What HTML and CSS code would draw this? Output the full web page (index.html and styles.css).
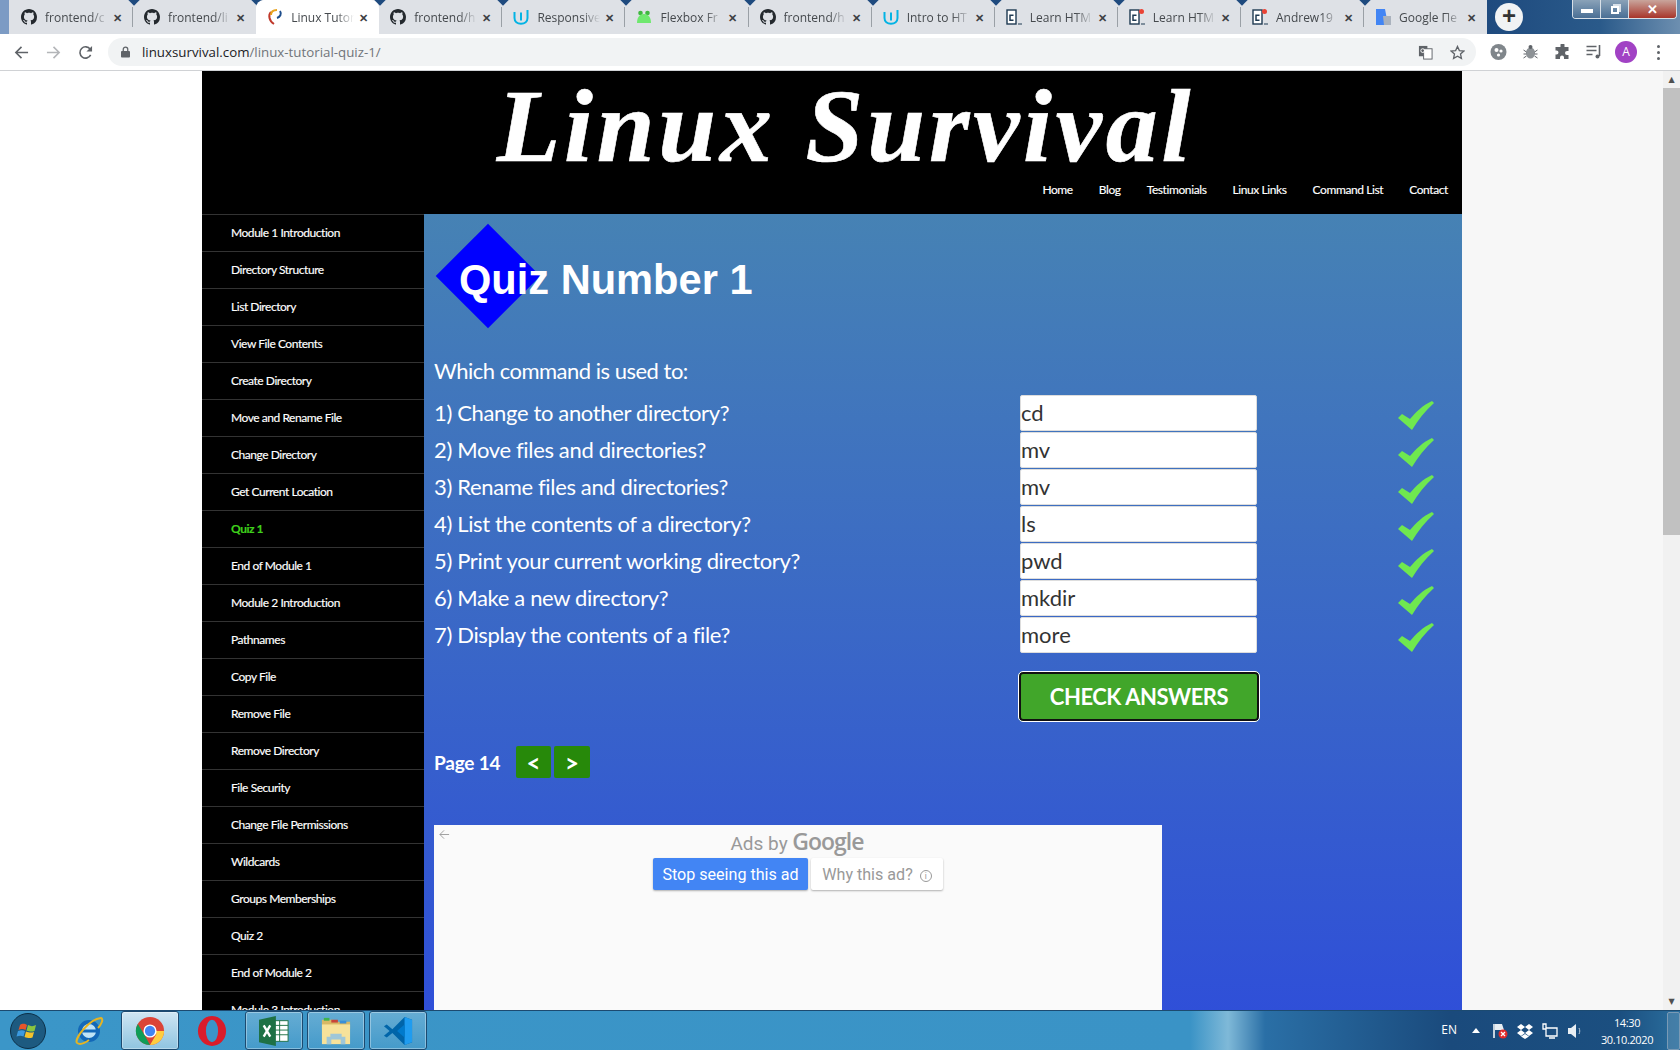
FILE: index.html
```html
<!DOCTYPE html>
<html lang="en">
<head>
<meta charset="UTF-8" />
<title>Linux Tutorial Quiz 1</title>
<link rel="stylesheet" href="styles.css">
</head>
<body>

<svg class="defs" width="0" height="0">
  <symbol id="gh" viewBox="0 0 16 16"><path fill="#24292e" d="M8 0C3.58 0 0 3.58 0 8c0 3.54 2.29 6.53 5.47 7.59.4.07.55-.17.55-.38 0-.19-.01-.82-.01-1.49-2.01.37-2.53-.49-2.69-.94-.09-.23-.48-.94-.82-1.13-.28-.15-.68-.52-.01-.53.63-.01 1.08.58 1.23.82.72 1.21 1.87.87 2.33.66.07-.52.28-.87.51-1.07-1.78-.2-3.64-.89-3.64-3.95 0-.87.31-1.59.82-2.15-.08-.2-.36-1.02.08-2.12 0 0 .67-.21 2.2.82.64-.18 1.32-.27 2-.27.68 0 1.36.09 2 .27 1.53-1.04 2.2-.82 2.2-.82.44 1.1.16 1.92.08 2.12.51.56.82 1.27.82 2.15 0 3.07-1.87 3.75-3.65 3.95.29.25.54.73.54 1.48 0 1.07-.01 1.93-.01 2.2 0 .21.15.46.55.38A8.013 8.013 0 0016 8c0-4.42-3.58-8-8-8z"/></symbol>
  <symbol id="uda" viewBox="0 0 16 16"><path fill="none" stroke="#02b3e4" stroke-width="2" d="M1.500 3v6c0 3.500 2.800 5.800 6.500 5.800s6.500-2.300 6.500-5.800V1M8 11.500V3.500"/></symbol>
  <symbol id="cc" viewBox="0 0 16 16"><rect x="1" y="1" width="9" height="14" fill="#fff" stroke="#1f3a52" stroke-width="1.400"/><path fill="none" stroke="#1f3a52" stroke-width="1.500" d="M7.500 6.200H4v5h3.500"/><path stroke="#1f3a52" d="M12 15h4"/></symbol>
  <symbol id="tick" viewBox="0 0 36 29"><path fill="#6fe84f" d="M0 17l4-4 8 5C18 11 25 4 34 0l2 2C27 10 20 19 14 29z"/></symbol>
</svg>

<div class="tabstrip">
  <div class="tab"><svg class="tab-ico"><use href="#gh"/></svg><span class="tab-title">frontend/c</span><span class="tab-x">✕</span></div>
  <div class="tab"><svg class="tab-ico"><use href="#gh"/></svg><span class="tab-title">frontend/li</span><span class="tab-x">✕</span></div>
  <div class="tab active">
    <svg class="tab-ico" viewBox="0 0 16 16"><path fill="none" stroke="#c0392b" stroke-width="2" d="M4 3C1 6 2 12 7 15"/><path fill="none" stroke="#e8a21c" stroke-width="2" d="M10 1C6 1 4 3 4 6"/><path fill="none" stroke="#1f4e8c" stroke-width="2" d="M13 2c2 3 0 6-3 7"/></svg>
    <span class="tab-title">Linux Tutor</span><span class="tab-x">✕</span>
  </div>
  <div class="tab"><svg class="tab-ico"><use href="#gh"/></svg><span class="tab-title">frontend/h</span><span class="tab-x">✕</span></div>
  <div class="tab"><svg class="tab-ico"><use href="#uda"/></svg><span class="tab-title">Responsive</span><span class="tab-x">✕</span></div>
  <div class="tab">
    <svg class="tab-ico" viewBox="0 0 16 16"><circle cx="4.500" cy="4" r="2.300" fill="#3fb83f"/><circle cx="11.500" cy="4" r="2.300" fill="#3fb83f"/><path fill="#6fe86f" d="M1 14c0-6 3-9 7-9s7 3 7 9z"/></svg>
    <span class="tab-title">Flexbox Fr</span><span class="tab-x">✕</span>
  </div>
  <div class="tab"><svg class="tab-ico"><use href="#gh"/></svg><span class="tab-title">frontend/h</span><span class="tab-x">✕</span></div>
  <div class="tab"><svg class="tab-ico"><use href="#uda"/></svg><span class="tab-title">Intro to HT</span><span class="tab-x">✕</span></div>
  <div class="tab"><svg class="tab-ico"><use href="#cc"/></svg><span class="tab-title">Learn HTM</span><span class="tab-x">✕</span></div>
  <div class="tab dotted"><svg class="tab-ico"><use href="#cc"/></svg><span class="tab-title">Learn HTM</span><span class="tab-x">✕</span></div>
  <div class="tab dotted"><svg class="tab-ico"><use href="#cc"/></svg><span class="tab-title">Andrew19</span><span class="tab-x">✕</span></div>
  <div class="tab">
    <svg class="tab-ico" viewBox="0 0 16 16"><path fill="#4285f4" d="M1 0h9l3 16H1z"/><path fill="#aab2bd" d="M8 7h8v9H9z"/></svg>
    <span class="tab-title">Google Пе</span><span class="tab-x">✕</span>
  </div>
  <div class="newtab">+</div>
  <div class="winctl">
    <span class="win-btn"><i class="win-min"></i></span>
    <span class="win-btn"><i class="win-max"></i></span>
    <span class="win-btn win-close">✕</span>
  </div>
</div>

<div class="toolbar">
  <svg class="tool-ico first" viewBox="0 0 16 16"><path fill="none" stroke="#5f6368" stroke-width="1.700" d="M15 8H2M8 2L2 8l6 6"/></svg>
  <svg class="tool-ico" viewBox="0 0 16 16"><path fill="none" stroke="#b4b6b9" stroke-width="1.700" d="M1 8h13M8 2l6 6-6 6"/></svg>
  <svg class="tool-ico" viewBox="0 0 16 16"><path fill="none" stroke="#5f6368" stroke-width="1.700" d="M13.500 10.500A6 6 0 1 1 13 4.500"/><path fill="#5f6368" d="M15 1v6H9z"/></svg>
  <div class="omnibox">
    <svg class="lock" viewBox="0 0 10 12"><rect y="5" width="10" height="7" rx="1" fill="#5f6368"/><path fill="none" stroke="#5f6368" stroke-width="1.400" d="M2.500 5V3a2.500 2.500 0 0 1 5 0v2"/></svg>
    <span class="url"><b>linuxsurvival.com</b>/linux-tutorial-quiz-1/</span>
    <svg class="omni-ico" viewBox="0 0 16 16"><rect x="1" y="1" width="9" height="11" fill="#5f6368"/><rect x="6" y="4" width="9" height="11" fill="#fff" stroke="#5f6368"/><circle cx="5" cy="6" r="2" fill="none" stroke="#fff"/></svg>
    <svg class="omni-ico star" viewBox="0 0 16 16"><path fill="none" stroke="#5f6368" stroke-width="1.400" d="M8 1.500l2 4.400 4.800.5-3.600 3.200 1 4.700L8 12l-4.200 2.300 1-4.700L1.200 6.400 6 5.900z"/></svg>
  </div>
  <svg class="ext-ico" viewBox="0 0 16 16"><circle cx="8" cy="8" r="8" fill="#80868b"/><circle cx="6" cy="6" r="2" fill="#fff"/><circle cx="10.500" cy="7" r="1.600" fill="#fff"/><circle cx="8" cy="11" r="1.600" fill="#fff"/></svg>
  <svg class="ext-ico" viewBox="0 0 16 16"><ellipse cx="8" cy="9" rx="4.500" ry="5.500" fill="#8d9296"/><circle cx="8" cy="3" r="2" fill="#5f6368"/><path stroke="#5f6368" d="M1 6l3 2M15 6l-3 2M1 10h3M15 10h-3M1 14l3-2M15 14l-3-2"/></svg>
  <svg class="ext-ico" viewBox="0 0 16 16"><path fill="#5f6368" d="M6 1a2 2 0 0 1 4 0v2h4v4h-1.500a2 2 0 0 0 0 4H14v4H9.500v-1.500a2 2 0 0 0-4 0V15H1v-4.500h1a2 2 0 0 0 0-4H1V3h5z"/></svg>
  <svg class="ext-ico" viewBox="0 0 16 16"><path stroke="#5f6368" stroke-width="1.400" d="M0 2.500h10M0 6.500h10M0 10.500h6"/><path fill="none" stroke="#5f6368" stroke-width="1.600" d="M13 1v11"/><circle cx="11" cy="12.500" r="2" fill="#5f6368"/></svg>
  <span class="avatar">A</span>
  <span class="dots"><i></i><i></i><i></i></span>
</div>

<div class="viewport">
  <div class="page">
    <div class="wrap">
      <header class="site-head">
        <div class="site-title">Linux Survival</div>
        <nav class="top-nav">
          <a>Home</a><a>Blog</a><a>Testimonials</a><a>Linux Links</a><a>Command List</a><a>Contact</a>
        </nav>
      </header>
      <div class="columns">
        <ul class="side-nav">
          <li>Module 1 Introduction</li>
          <li>Directory Structure</li>
          <li>List Directory</li>
          <li>View File Contents</li>
          <li>Create Directory</li>
          <li>Move and Rename File</li>
          <li>Change Directory</li>
          <li>Get Current Location</li>
          <li class="current">Quiz 1</li>
          <li>End of Module 1</li>
          <li>Module 2 Introduction</li>
          <li>Pathnames</li>
          <li>Copy File</li>
          <li>Remove File</li>
          <li>Remove Directory</li>
          <li>File Security</li>
          <li>Change File Permissions</li>
          <li>Wildcards</li>
          <li>Groups Memberships</li>
          <li>Quiz 2</li>
          <li>End of Module 2</li>
          <li>Module 3 Introduction</li>
        </ul>
        <main class="content">
          <div class="quiz-head">
            <span class="diamond"></span>
            <h1>Quiz Number 1</h1>
          </div>
          <p class="lead">Which command is used to:</p>
          <div class="quiz-row"><label>1) Change to another directory?</label><input value="cd"><svg class="tick"><use href="#tick"/></svg></div>
          <div class="quiz-row"><label>2) Move files and directories?</label><input value="mv"><svg class="tick"><use href="#tick"/></svg></div>
          <div class="quiz-row"><label>3) Rename files and directories?</label><input value="mv"><svg class="tick"><use href="#tick"/></svg></div>
          <div class="quiz-row"><label>4) List the contents of a directory?</label><input value="ls"><svg class="tick"><use href="#tick"/></svg></div>
          <div class="quiz-row"><label>5) Print your current working directory?</label><input value="pwd"><svg class="tick"><use href="#tick"/></svg></div>
          <div class="quiz-row"><label>6) Make a new directory?</label><input value="mkdir"><svg class="tick"><use href="#tick"/></svg></div>
          <div class="quiz-row"><label>7) Display the contents of a file?</label><input value="more"><svg class="tick"><use href="#tick"/></svg></div>
          <button class="check">CHECK ANSWERS</button>
          <div class="pager">
            <span class="page-no">Page 14</span>
            <button class="page-btn">&lt;</button>
            <button class="page-btn">&gt;</button>
          </div>
          <div class="ad">
            <svg class="ad-back" viewBox="0 0 12 12"><path fill="none" stroke="#999" d="M11 6H1M5.500 1.500L1 6l4.500 4.500"/></svg>
            <div class="ad-by">Ads by <b>Google</b></div>
            <div class="ad-btns">
              <span class="ad-stop">Stop seeing this ad</span>
              <span class="ad-why">Why this ad? <i>i</i></span>
            </div>
          </div>
        </main>
      </div>
    </div>
  </div>
  <div class="scrollbar">
    <span class="sb-arrow">▲</span>
    <div class="sb-track"><div class="sb-thumb"></div></div>
    <span class="sb-arrow">▼</span>
  </div>
</div>

<footer class="taskbar">
  <svg class="orb" viewBox="0 0 36 36">
    <circle cx="18" cy="18" r="17.500" fill="#1d5a80" stroke="#0c2f47"/>
    <path fill="#e8552a" d="M10 12c3-2 5-1 7 0l-1.500 5c-2-1-4-1.500-7 0z"/>
    <path fill="#8bc43f" d="M18 12c3 1.500 5 1.500 8 0l-1.500 6c-3 1-5 .5-8-.5z"/>
    <path fill="#3b9ae0" d="M8 18c3-1 5-1 7 0l-1.500 5.500c-2-1-4-1-7 0z"/>
    <path fill="#f4c22b" d="M16 18.500c3 1 5 1.500 8 .5l-1.500 5.500c-3 1-5 .5-8-.5z"/>
  </svg>
  <svg class="tb-ie" viewBox="0 0 32 32">
    <circle cx="16" cy="16" r="9" fill="#bfe3f7" stroke="#1368b8" stroke-width="4"/>
    <path stroke="#1368b8" stroke-width="3" d="M8 16h16"/>
    <path fill="none" stroke="#e6b422" stroke-width="2" d="M4 28c-3-4 12-24 24-25 3 1 0 7-3 10M4 28c3 2 8 0 12-3"/>
  </svg>
  <div class="tb-btn on">
    <svg class="tb-ico" viewBox="0 0 32 32">
      <circle cx="16" cy="16" r="15" fill="#db4437"/>
      <path fill="#0f9d58" d="M16 31A15 15 0 0 1 3 8.500L10 20l6 11z"/>
      <path fill="#ffcd40" d="M16 31l7-12-7-3h15A15 15 0 0 1 16 31z"/>
      <circle cx="16" cy="16" r="7" fill="#fff"/>
      <circle cx="16" cy="16" r="5.500" fill="#4285f4"/>
    </svg>
  </div>
  <div class="tb-plain">
    <svg class="tb-ico" viewBox="0 0 32 32"><ellipse cx="16" cy="16" rx="15" ry="16" fill="#d91c2b"/><ellipse cx="16" cy="16" rx="6.500" ry="12" fill="#3a94c8"/></svg>
  </div>
  <div class="tb-btn">
    <svg class="tb-ico" viewBox="0 0 32 32"><rect x="14" y="5" width="17" height="22" fill="#fff" stroke="#1e7145"/><path stroke="#1e7145" d="M14 10h17M14 15h17M14 20h17M22 5v22"/><path fill="#1e7145" d="M0 4l18-4v32L0 28z"/><path stroke="#fff" stroke-width="2.500" d="M5 10l7 12M12 10L5 22"/></svg>
  </div>
  <div class="tb-btn">
    <svg class="tb-ico tb-folder" viewBox="0 0 32 32"><path fill="#d8b865" d="M1 4h12l2 2h16v8H1z"/><rect x="3" y="2" width="6" height="3" fill="#3fb34f"/><rect x="11" y="4" width="7" height="3" fill="#c9443a"/><rect x="20" y="5" width="7" height="3" fill="#3a8fd8"/><path fill="#f7e29a" d="M1 9h30v21H1z"/><path fill="#9fc7d8" d="M10 19h12v3h4v8h-5v-5H11v5H6v-8h4z"/></svg>
  </div>
  <div class="tb-btn">
    <svg class="tb-ico" viewBox="0 0 32 32"><path fill="#0065a9" d="M23 1L10 14 4 9 1 11l6 5-6 5 3 2 6-5 13 13 8-3V4z"/><path fill="#1f9cf0" d="M23 1l8 3v24l-8 3z"/><path fill="#007acc" d="M23 9l-8 7 8 7z"/></svg>
  </div>
  <div class="tray">
    <span class="lang">EN</span>
    <span class="tray-up"></span>
    <svg class="tray-ico" viewBox="0 0 16 16"><path stroke="#fff" stroke-width="1.500" d="M2 1v14"/><path fill="#e8eef3" d="M3 1h7l2 6H3z"/><circle cx="11" cy="11" r="4.500" fill="#e02b2b"/><path stroke="#fff" stroke-width="1.300" d="M9 9l4 4M13 9l-4 4"/></svg>
    <svg class="tray-ico" viewBox="0 0 16 16"><path fill="#fff" d="M4 1l4 3-4 3-4-3zM12 1l4 3-4 3-4-3zM4 7l4 3-4 3-4-3zM12 7l4 3-4 3-4-3zM4 13.500l4-2.500 4 2.500-4 2.500z"/></svg>
    <svg class="tray-ico" viewBox="0 0 16 16"><path fill="none" stroke="#fff" stroke-width="1.300" d="M4 5h11v8H4zM1 1v5h3V1zM7 15h6"/></svg>
    <svg class="tray-ico" viewBox="0 0 16 16"><path fill="#e8eef3" d="M1 5h3l5-4v14l-5-4H1z"/><path fill="none" stroke="#b8c8d6" d="M12 5c1 2 1 4 0 6"/></svg>
    <div class="clock"><span>14:30</span><span>30.10.2020</span></div>
    <span class="show-desk"></span>
  </div>
</footer>

</body>
</html>
```

FILE: styles.css
```css
* {
  box-sizing: border-box;
}
html, body {
  margin: 0;
  height: 100%;
}
body {
  width: 1680px;
  height: 1050px;
  overflow: hidden;
  display: flex;
  flex-direction: column;
  font-family: Lato, "Liberation Sans", sans-serif;
  background: #fff;
}
.defs {
  position: absolute;
}

/* browser chrome */
.tabstrip {
  height: 34px;
  flex: none;
  display: flex;
  padding-left: 10px;
  position: relative;
  background: linear-gradient(90deg, #7c9bc4 0, #7c9bc4 9px, #dee1e6 9px, #dee1e6 1487px, #1e4a7e 1487px, #2a5a8a 1600px, #6d8fb0 1680px);
}
.tab {
  width: 123.1px;
  flex: none;
  display: flex;
  align-items: center;
  padding-left: 11px;
  position: relative;
  background: linear-gradient(#9aa0a6, #9aa0a6) right 7px / 1px 20px no-repeat;
  font: 12px "Open Sans", sans-serif;
  color: #45494d;
}
.tab:nth-child(2), .tab:nth-child(12) {
  background: none;
}
.tab::before {
  content: "";
  position: absolute;
  top: -4px;
  right: -5px;
  width: 8px;
  height: 8px;
  background: #1e4a7e;
  transform: rotate(45deg);
  z-index: 1;
}
.tab:nth-child(12)::before {
  display: none;
}
.tab.active {
  background: #fff;
  border-radius: 8px 8px 0 0;
  z-index: 2;
}
.tab-ico {
  width: 16px;
  height: 16px;
  flex: none;
}
.tab-title {
  width: 63px;
  margin-left: 8px;
  white-space: nowrap;
  overflow: hidden;
  -webkit-mask-image: linear-gradient(90deg, #000 72%, transparent);
  mask-image: linear-gradient(90deg, #000 72%, transparent);
}
.tab-x {
  margin-left: 5px;
  font-size: 11px;
  font-weight: bold;
  color: #3c4043;
}
.dotted::after {
  content: "";
  position: absolute;
  left: 21px;
  top: 9px;
  width: 5px;
  height: 5px;
  border-radius: 50%;
  background: #ea4335;
}
.newtab {
  position: absolute;
  left: 1495px;
  top: 3px;
  width: 28px;
  height: 28px;
  border-radius: 50%;
  background: #f1f3f4;
  color: #333;
  text-align: center;
  font: bold 24px/26px "Liberation Sans", sans-serif;
}
.winctl {
  position: absolute;
  right: 3px;
  top: 0;
  height: 19px;
  display: flex;
  border: 1px solid #d8e0e8;
  border-top: 0;
  border-radius: 0 0 4px 4px;
  overflow: hidden;
}
.win-btn {
  width: 28px;
  display: flex;
  align-items: center;
  justify-content: center;
  background: linear-gradient(#8aa2b8, #4a6f95);
  border-right: 1px solid #d8e0e8;
}
.win-min {
  width: 12px;
  height: 4px;
  margin-top: 4px;
  background: #fff;
}
.win-max {
  width: 8px;
  height: 8px;
  margin-top: 2px;
  border: 2px solid #fff;
  box-shadow: 2px -2px 0 0 #d8e0e8;
}
.win-close {
  width: 47px;
  border-right: 0;
  color: #fff;
  font: bold 13px "Liberation Sans", sans-serif;
  background: linear-gradient(#c9a59c, #a8352a);
}

.toolbar {
  height: 37px;
  flex: none;
  display: flex;
  align-items: center;
  background: #fff;
  border-bottom: 1px solid #d0d2d5;
  padding-left: 14px;
}
.tool-ico {
  width: 15px;
  height: 15px;
  margin-right: 17px;
}
.omnibox {
  width: 1368px;
  height: 28px;
  margin-left: -2px;
  display: flex;
  align-items: center;
  padding-left: 13px;
  border-radius: 14px;
  background: #f1f3f4;
}
.lock {
  width: 9px;
  height: 12px;
}
.url {
  margin-left: 12px;
  font: 13.3px "Open Sans", sans-serif;
  color: #70757a;
  flex: 1;
}
.url b {
  font-weight: 400;
  color: #202124;
}
.omni-ico {
  width: 15px;
  height: 15px;
  margin-right: 17px;
}
.omni-ico.star {
  margin-right: 11px;
}
.ext-ico {
  width: 17px;
  height: 16px;
  margin-left: 15px;
}
.omnibox + .ext-ico {
  margin-left: 13.5px;
}
.avatar {
  width: 22px;
  height: 22px;
  margin-left: 12.5px;
  border-radius: 50%;
  background: #a142c4;
  color: #fff;
  text-align: center;
  font: 12px/22px "Open Sans", sans-serif;
}
.dots {
  display: flex;
  flex-direction: column;
  gap: 3px;
  margin-left: 19.5px;
}
.dots i {
  width: 3px;
  height: 3px;
  border-radius: 50%;
  background: #5f6368;
}

/* the page */
.viewport {
  flex: 1;
  min-height: 0;
  display: flex;
}
.page {
  flex: 1;
  overflow: hidden;
  padding-left: 202px;
  background: linear-gradient(90deg, #fff 0, #fff 1462px, #f7f7f7 1462px);
}
.wrap {
  width: 1260px;
}
.site-head {
  height: 143px;
  background: #000;
  color: #fff;
  display: flex;
  flex-direction: column;
}
.site-title {
  height: 104px;
  text-align: center;
  padding-left: 27px;
  font: italic bold 104px/110px "Liberation Serif", serif;
  letter-spacing: 3.8px;
  white-space: nowrap;
  -webkit-text-stroke: 0.6px #fff;
}
.top-nav {
  display: flex;
  justify-content: flex-end;
  gap: 26px;
  padding: 7px 14px 0 0;
  font-size: 12px;
  letter-spacing: -0.4px;
  -webkit-text-stroke: 0.15px #fff;
}
.columns {
  display: flex;
}
.side-nav {
  width: 222px;
  flex: none;
  margin: 0;
  padding: 0;
  list-style: none;
  background: #000;
  color: #fff;
  font-size: 12px;
  letter-spacing: -0.45px;
}
.side-nav li {
  height: 37px;
  line-height: 35px;
  padding-left: 29px;
  border-top: 1px solid #333;
  -webkit-text-stroke: 0.15px currentColor;
}
.side-nav .current {
  color: #3fd01c;
  font-weight: bold;
}
.content {
  flex: 1;
  height: 800px;
  padding-left: 10px;
  color: #fff;
  background: linear-gradient(#4682b4, #2f4fd8);
}
.quiz-head {
  position: relative;
  height: 138px;
}
.diamond {
  position: absolute;
  left: 17px;
  top: 25px;
  width: 74px;
  height: 74px;
  background: #00f;
  transform: rotate(45deg);
}
.quiz-head h1 {
  position: absolute;
  left: 25px;
  top: 41px;
  margin: 0;
  font: bold 41.6px/50px "Liberation Sans", sans-serif;
  white-space: nowrap;
}
.lead {
  margin: 0 0 7px;
  font-size: 22px;
  letter-spacing: -0.5px;
  line-height: 37px;
  height: 35px;
}
.quiz-row {
  height: 37px;
  display: flex;
  align-items: center;
  font-size: 22px;
  letter-spacing: -0.35px;
}
.quiz-row label {
  width: 586px;
  flex: none;
}
.quiz-row input {
  width: 237px;
  height: 36px;
  padding: 0;
  border: 1px solid #ddd;
  border-radius: 2px;
  font: 22px Lato, sans-serif;
  color: #333;
  background: #fff;
}
.tick {
  width: 36px;
  height: 29px;
  margin: 6px 0 0 141px;
}
.check {
  display: block;
  width: 242px;
  height: 51px;
  margin: 18px 0 0 584px;
  padding: 0;
  border: 1px solid #fff;
  box-shadow: inset 0 0 0 2px #111;
  border-radius: 5px;
  background: #41a62a;
  color: #fff;
  font: bold 22px Lato, sans-serif;
  letter-spacing: -0.45px;
}
.pager {
  display: flex;
  align-items: center;
  margin-top: 24px;
}
.page-no {
  width: 82px;
  font-weight: bold;
  font-size: 19px;
  letter-spacing: -0.2px;
}
.page-btn {
  width: 35px;
  height: 32px;
  margin-right: 3px;
  padding: 0;
  border: 0;
  border-radius: 2px;
  background: #27890a;
  color: #fff;
  font: bold 24px Lato, sans-serif;
}
.page-btn:last-child {
  width: 36px;
}
.ad {
  position: relative;
  width: 728px;
  height: 260px;
  margin-top: 47px;
  background: #fafafa;
  text-align: center;
  font-family: Roboto, sans-serif;
}
.ad-back {
  position: absolute;
  left: 5px;
  top: 4px;
  width: 11px;
  height: 11px;
}
.ad-by {
  height: 33px;
  color: #999;
  font-size: 19px;
  line-height: 27px;
  padding-right: 2px;
}
.ad-by b {
  font: 600 23px "Open Sans", sans-serif;
  letter-spacing: -1px;
  color: #999;
}
.ad-btns {
  display: flex;
  justify-content: center;
  gap: 3px;
}
.ad-stop, .ad-why {
  height: 32px;
  line-height: 33px;
  border-radius: 2px;
  font-size: 16.1px;
  box-shadow: 0 1px 2px rgba(0,0,0,.3);
}
.ad-stop {
  width: 155px;
  background: #4285f4;
  color: #fff;
}
.ad-why {
  width: 132px;
  background: #fff;
  color: #999;
}
.ad-why i {
  display: inline-block;
  width: 12px;
  height: 12px;
  margin-left: 3px;
  border: 1px solid #999;
  border-radius: 50%;
  font: 9px/10px "Liberation Sans", sans-serif;
  vertical-align: 1px;
}
.scrollbar {
  width: 17px;
  flex: none;
  display: flex;
  flex-direction: column;
  background: #f1f1f1;
  text-align: center;
}
.sb-arrow {
  height: 17px;
  font: 8px/17px "DejaVu Sans", sans-serif;
  color: #505050;
}
.sb-track {
  flex: 1;
}
.sb-thumb {
  height: 447px;
  background: #c1c1c1;
}

/* windows taskbar */
.taskbar {
  height: 40px;
  flex: none;
  display: flex;
  align-items: center;
  position: relative;
  padding-left: 10px;
  border-top: 1px solid #1c4a70;
  background: linear-gradient(90deg, #3b96c8 0, #3a93c6 1190px, #7fb9d8 1228px, #2a6fa6 1265px, #1a4a7c 1450px, #1b4f80 1620px, #2b6f9e 1680px);
}
.orb {
  width: 36px;
  height: 36px;
}
.tb-ie {
  width: 32px;
  height: 32px;
  margin: 0 16px 0 27px;
}
.tb-btn, .tb-plain {
  width: 58px;
  height: 39px;
  margin-right: 4px;
  display: flex;
  align-items: center;
  justify-content: center;
  border-radius: 3px;
}
.tb-btn {
  border: 1px solid #1c4a70;
  box-shadow: inset 0 0 0 1px rgba(255,255,255,.35);
  background: linear-gradient(rgba(255,255,255,.22), rgba(255,255,255,.05));
}
.tb-btn.on {
  background: linear-gradient(#cfe6f3, #8fc4e0);
}
.tb-ico {
  width: 30px;
  height: 30px;
}
.tray {
  margin-left: auto;
  display: flex;
  align-items: center;
  color: #fff;
  font: 11px "Open Sans", sans-serif;
}
.lang {
  margin-right: 15px;
  margin-top: -3px;
  font-size: 12px;
}
.tray-up {
  width: 0;
  height: 0;
  margin-right: 12px;
  border: 4px solid transparent;
  border-top: 0;
  border-bottom: 5px solid #fff;
}
.tray-ico {
  width: 16px;
  height: 16px;
  margin-right: 9px;
}
.clock {
  width: 66px;
  margin-left: 2px;
  display: flex;
  flex-direction: column;
  align-items: center;
  line-height: 17px;
  letter-spacing: -0.4px;
}
.show-desk {
  width: 13px;
  height: 38px;
  margin-left: 7px;
  border: 1px solid #7a9ab5;
  border-radius: 2px;
  background: rgba(255,255,255,.12);
}
```
